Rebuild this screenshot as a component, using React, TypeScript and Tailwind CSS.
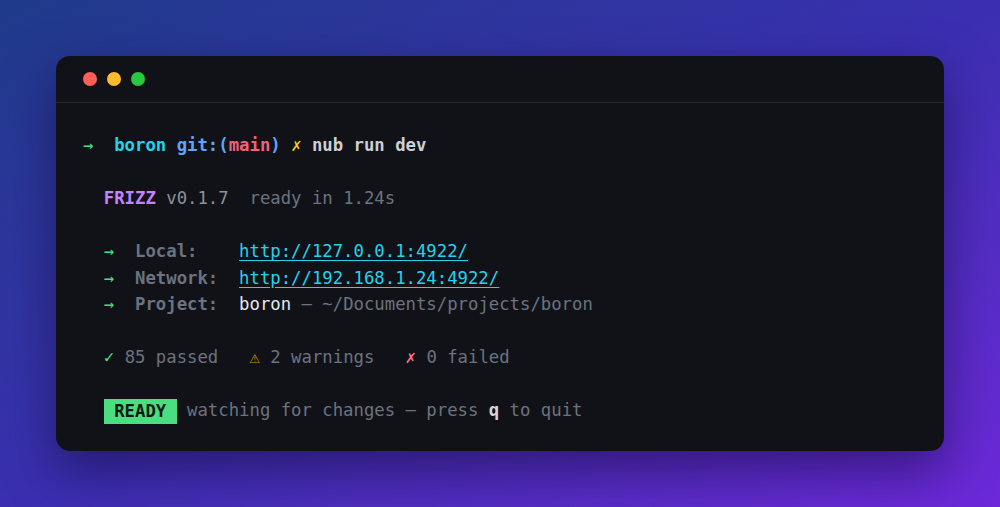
import { Fragment } from 'react';

const mono = "font-['DejaVu_Sans_Mono','Liberation_Mono',monospace]";

const links = [
  { label: 'Local:    ', url: 'http://127.0.0.1:4922/' },
  { label: 'Network:  ', url: 'http://192.168.1.24:4922/' },
];

function Line({ children }: { children?: React.ReactNode }) {
  return <div className="h-[26.5px] leading-[26.5px] whitespace-pre">{children ?? ' '}</div>;
}

export default function App() {
  return (
    <div className="h-screen w-full flex items-center justify-center bg-gradient-to-br from-[#1e3a8a] via-[#3a2fb0] to-[#6d28d9]">
      <div className="w-[888px] rounded-[14px] bg-[#111217] shadow-[0_20px_50px_rgba(20,10,60,0.55)] overflow-hidden">
        {/* title bar */}
        <div className="h-[47px] flex items-center gap-[10px] px-[27px] border-b border-[#24262d]">
          <span className="w-[14px] h-[14px] rounded-full bg-[#ff5f57]" />
          <span className="w-[14px] h-[14px] rounded-full bg-[#febc2e]" />
          <span className="w-[14px] h-[14px] rounded-full bg-[#28c840]" />
        </div>

        <div className={`${mono} text-[17.3px] pl-[27px] pr-7 pt-[29px] pb-[27px] text-[#6b7280]`}>
          <Line>
            <span className="text-[#4ade80]">→</span>
            {'  '}
            <span className="font-bold text-[#22d3ee]">boron</span>{' '}
            <span className="font-bold text-[#60a5fa]">git:(</span>
            <span className="font-bold text-[#f0627a]">main</span>
            <span className="font-bold text-[#60a5fa]">)</span>{' '}
            <span className="font-bold text-[#facc15]">✗</span>{' '}
            <span className="font-bold text-[#cbd0d8]">nub run dev</span>
          </Line>
          <Line />
          <Line>
            {'  '}
            <span className="font-bold text-[#c084fc]">FRIZZ</span>{' '}
            <span className="text-[#8b919c]">v0.1.7</span>
            {'  ready in 1.24s'}
          </Line>
          <Line />
          {links.map((l) => (
            <Line key={l.url}>
              {'  '}
              <span className="text-[#4ade80]">→</span>
              {'  '}
              <span className="font-bold text-[#6b7280]">{l.label}</span>
              <span className="text-[#22d3ee] underline underline-offset-[3px]">{l.url}</span>
            </Line>
          ))}
          <Line>
            {'  '}
            <span className="text-[#4ade80]">→</span>
            {'  '}
            <span className="font-bold text-[#6b7280]">{'Project:  '}</span>
            <span className="text-[#e5e7eb]">boron</span>
            {' — ~/Documents/projects/boron'}
          </Line>
          <Line />
          <Line>
            {'  '}
            {[
              { icon: '✓', color: 'text-[#4ade80]', text: '85 passed' },
              { icon: '⚠', color: 'text-[#ca8a04]', text: '2 warnings' },
              { icon: '✗', color: 'text-[#fb7185]', text: '0 failed' },
            ].map((s, i) => (
              <Fragment key={s.text}>
                {i > 0 && '   '}
                <span className={s.color}>{s.icon}</span> {s.text}
              </Fragment>
            ))}
          </Line>
          <Line />
          <Line>
            {'  '}
            <span className="inline-block h-[25px] leading-[25px] align-middle bg-[#4ade80] text-[#0f1a14] font-bold">
              {' READY '}
            </span>
            {' watching for changes — press '}
            <span className="font-bold text-[#d1d5db]">q</span>
            {' to quit'}
          </Line>
        </div>
      </div>
    </div>
  );
}
